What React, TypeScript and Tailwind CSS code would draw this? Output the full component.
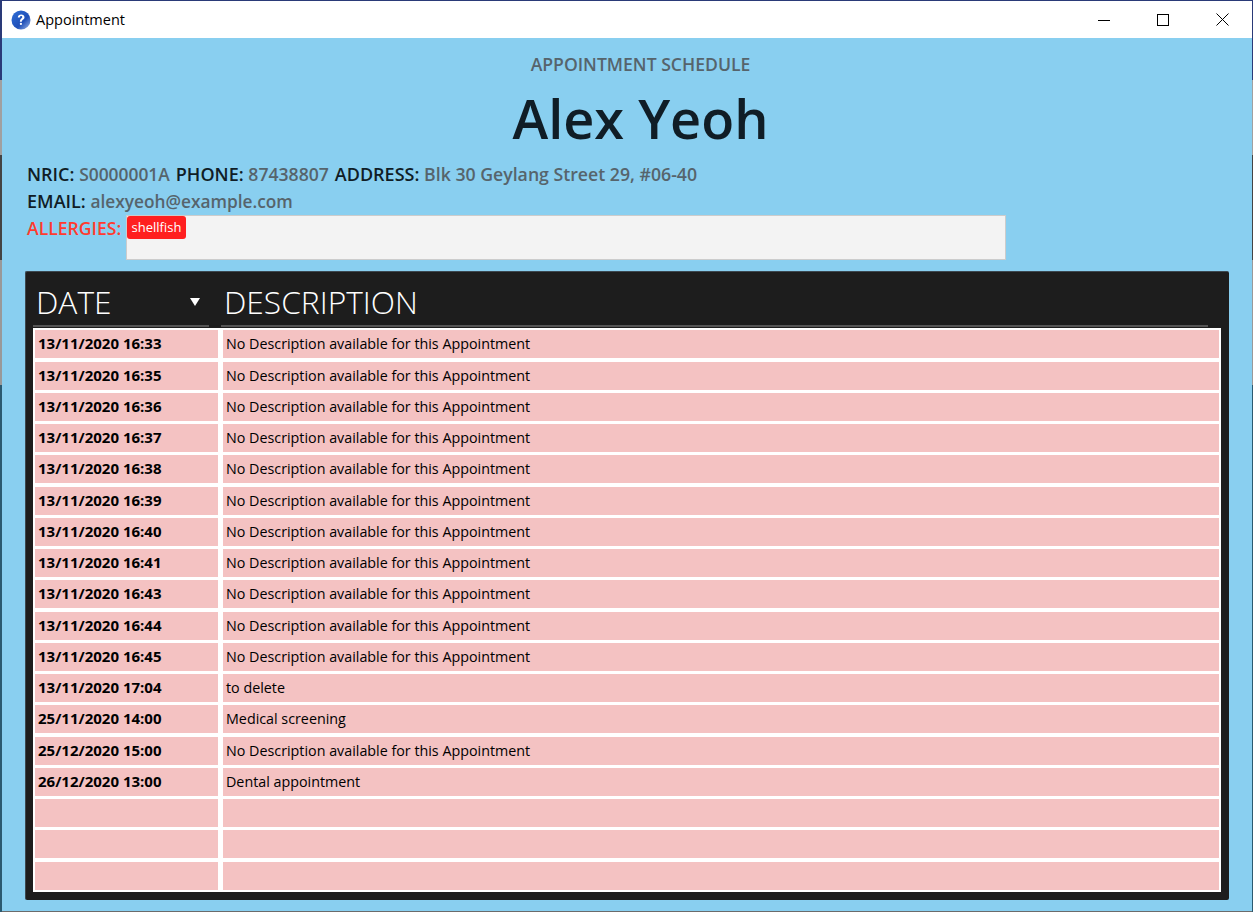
import React from 'react';

const rows = [
  ['13/11/2020 16:33', 'No Description available for this Appointment'],
  ['13/11/2020 16:35', 'No Description available for this Appointment'],
  ['13/11/2020 16:36', 'No Description available for this Appointment'],
  ['13/11/2020 16:37', 'No Description available for this Appointment'],
  ['13/11/2020 16:38', 'No Description available for this Appointment'],
  ['13/11/2020 16:39', 'No Description available for this Appointment'],
  ['13/11/2020 16:40', 'No Description available for this Appointment'],
  ['13/11/2020 16:41', 'No Description available for this Appointment'],
  ['13/11/2020 16:43', 'No Description available for this Appointment'],
  ['13/11/2020 16:44', 'No Description available for this Appointment'],
  ['13/11/2020 16:45', 'No Description available for this Appointment'],
  ['13/11/2020 17:04', 'to delete'],
  ['25/11/2020 14:00', 'Medical screening'],
  ['25/12/2020 15:00', 'No Description available for this Appointment'],
  ['26/12/2020 13:00', 'Dental appointment'],
  ['', ''],
  ['', ''],
  ['', ''],
];

const HelpIcon = () => (
  <svg width="20" height="20" viewBox="0 0 20 20">
    <defs>
      <linearGradient id="help" x1="0" y1="0" x2="1" y2="1">
        <stop offset="0" stopColor="#2f6fd8" />
        <stop offset="0.6" stopColor="#1f4fb8" />
        <stop offset="1" stopColor="#9db8e8" />
      </linearGradient>
    </defs>
    <circle cx="10" cy="10" r="9.5" fill="url(#help)" />
    <path d="M6.8 7.6c0-2 1.5-3.2 3.4-3.2 2 0 3.3 1.1 3.3 2.8 0 2.4-2.7 2.4-2.7 4.6H8.9c0-3 2.4-3.2 2.4-4.7 0-.7-.5-1.1-1.2-1.1-.8 0-1.2.5-1.3 1.6z" fill="#fff" />
    <rect x="8.8" y="12.8" width="2.2" height="2.2" rx="1" fill="#fff" />
  </svg>
);

const TitleBar = () => (
  <div className="flex h-[37px] items-center justify-between bg-white">
    <div className="flex items-center gap-[5px] pl-[9px]">
      <HelpIcon />
      <span className="text-[14.5px] text-black">Appointment</span>
    </div>
    <div className="flex items-center text-black">
      <div className="flex h-[37px] w-[58px] items-center justify-center">
        <svg width="12" height="12" viewBox="0 0 12 12"><path d="M0 6.5h12" stroke="#000" /></svg>
      </div>
      <div className="flex h-[37px] w-[60px] items-center justify-center">
        <svg width="12" height="12" viewBox="0 0 12 12"><rect x="0.5" y="0.5" width="11" height="11" fill="none" stroke="#000" /></svg>
      </div>
      <div className="flex h-[37px] w-[59px] items-center justify-center">
        <svg width="13" height="13" viewBox="0 0 13 13"><path d="M0.5 0.5l12 12M12.5 0.5l-12 12" stroke="#000" /></svg>
      </div>
    </div>
  </div>
);

const Label = ({ children, value, valueClass }: { children: string; value: string; valueClass: string }) => (
  <span className="mr-[6px]">
    <span className="text-[#101d26]">{children} </span>
    <span className={`text-[#56646c] ${valueClass}`}>{value}</span>
  </span>
);

const App: React.FC = () => {
  return (
    <div
      className="h-[912px] w-[1253px] overflow-hidden bg-[linear-gradient(to_bottom,#2a3a78_0,#2a3a78_80px,#a0a0a0_80px,#a0a0a0_155px,#444444_155px,#444444_260px,#999999_260px,#999999_385px,#2c5a70_385px,#2c5a70_912px)] pt-px pl-[2px] pr-px"
      style={{ fontFamily: '"Open Sans", "Noto Sans", sans-serif' }}
    >
      <TitleBar />
      <div className="flex h-[874px] flex-col border-b border-[#6b6b6b] bg-[#89cff0]">
        <div className="pt-[14px] pl-[27px] text-center text-[17.6px] leading-[24px] font-semibold text-[#56646c]">
          APPOINTMENT SCHEDULE
        </div>
        <div className="mt-[6px] pl-[27px] text-center text-[54px] leading-[72px] font-semibold text-[#101d26]">
          Alex Yeoh
        </div>
        <div className="pl-[25px] text-[18px] leading-[27px] font-semibold">
          <div className="mt-[7px]">
            <Label value="S0000001A" valueClass="text-[17.4px]">NRIC:</Label>
            <Label value="87438807" valueClass="text-[17.6px]">PHONE:</Label>
            <Label value="Blk 30 Geylang Street 29, #06-40" valueClass="text-[17.7px]">ADDRESS:</Label>
          </div>
          <div>
            <Label value="alexyeoh@example.com" valueClass="text-[17.3px]">EMAIL:</Label>
          </div>
          <div className="flex items-start">
            <span className="w-[99px] text-[17.6px] leading-[27px] text-[#ff3b2f]">ALLERGIES:</span>
            <div className="h-[45px] w-[880px] border border-[#cccccc] bg-[#f3f3f3]">
              <span className="block h-[23px] w-[59px] rounded-[3px] bg-[#ff1f1f] text-center text-[13px] leading-[22px] font-normal text-white">
                shellfish
              </span>
            </div>
          </div>
        </div>
        <div className="mt-[11px] ml-[23px] h-[629px] w-[1204px] rounded-[2px] border-t border-l border-[#3c4850] bg-[#1d1d1d] px-[7px]">
          <div className="mb-px flex h-[55px] gap-[12px] text-white">
            <div className="flex w-[176px] items-end justify-between border-b-2 border-[#555555] pb-[1px] pl-[3px] pr-[9px]">
              <span className="text-[31.7px] leading-[44px] font-light">DATE</span>
              <svg className="mb-[18px]" width="10" height="8" viewBox="0 0 10 8"><path d="M0 0h10L5 8z" fill="#fff" /></svg>
            </div>
            <div className="flex w-[987px] items-end border-b-2 border-[#555555] pb-[1px] pl-[3px]">
              <span className="text-[31.7px] leading-[44px] font-light">DESCRIPTION</span>
            </div>
          </div>
          <div className="flex h-[564px] w-[1188px] flex-col overflow-hidden bg-white px-[2px] pt-[2.4px]">
            {rows.map((row, i) => (
              <div key={i} className="flex h-[31.25px] shrink-0 gap-[5px] pb-[3.25px] text-[14.3px] leading-[28px] text-black">
                <div className="w-[183px] bg-[#f4c2c2] pl-[3px] text-[15px] leading-[26.5px] font-bold">{row[0]}</div>
                <div className="flex-1 bg-[#f4c2c2] pl-[3px]">{row[1]}</div>
              </div>
            ))}
          </div>
        </div>
      </div>
    </div>
  );
};

export default App;
